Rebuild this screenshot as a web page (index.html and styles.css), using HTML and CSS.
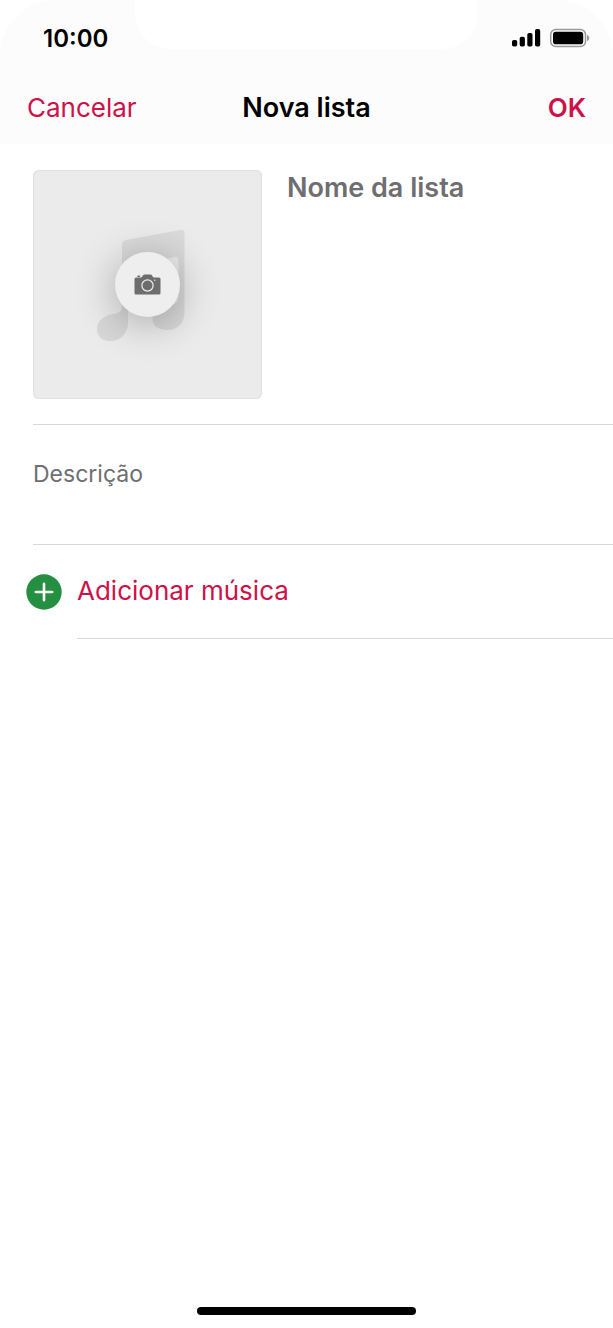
FILE: index.html
```html
<!DOCTYPE html>
<html lang="pt">
<head>
<meta charset="utf-8">
<meta name="viewport" content="width=device-width, initial-scale=1">
<title>Nova lista</title>
<link rel="stylesheet" href="styles.css">
</head>
<body>
<header class="top">
  <div class="notch"></div>
  <div class="status">
    <time class="clock">10:00</time>
    <svg class="status-icons" width="78" height="20" viewBox="0 0 78 20" aria-hidden="true">
      <rect x="0" y="12" width="5.200" height="6.500" rx="1.800"/>
      <rect x="7.700" y="8.800" width="5.200" height="9.700" rx="1.800"/>
      <rect x="15.300" y="5" width="5.200" height="13.500" rx="1.800"/>
      <rect x="23" y="1" width="5.200" height="17.500" rx="1.800"/>
      <rect x="38.700" y="1.500" width="34.800" height="17" rx="5" fill="none" stroke="#999" stroke-width="1.500"/>
      <rect x="41" y="3.800" width="30.200" height="12.400" rx="2.800"/>
      <path d="M75 7c3 1 3 5 0 6z" fill="#999"/>
    </svg>
  </div>
  <nav class="bar">
    <button class="action" type="button">Cancelar</button>
    <h1 class="title">Nova lista</h1>
    <button class="action done" type="button">OK</button>
  </nav>
</header>
<main class="content">
  <section class="intro">
    <button class="cover" type="button" aria-label="Adicionar imagem">
      <svg class="note" viewBox="0 0 229 229" aria-hidden="true">
        <defs>
          <linearGradient id="fade" x1="0" y1="0" x2="0" y2="1">
            <stop offset="0" stop-color="#dadada"/>
            <stop offset="1" stop-color="#d7d7d7"/>
          </linearGradient>
        </defs>
        <path fill="url(#fade)" d="M89 75q0-4 4-5L147 60q4.500-1 4.500 4V142c0 11-7 18-17 18-9 0-15-4-15-11 0-8 7-13 17-14 7-1 9-3 9-9V91q0-5-4-4L99 96q-4 1-4 5v52c0 11-8 18-18 18-8 0-13-5-13-12 0-8 7-14 16-15 7-1 9-3 9-8z"/>
      </svg>
      <span class="camera">
        <svg width="27" height="21" viewBox="0 0 27 21" aria-hidden="true">
          <path fill="#6d6d6d" d="M2 3.500H7c1.800 0 1.300-3 3.500-3h6c2.200 0 1.700 3 3.500 3h5q1.500 0 1.500 1.500v14q0 1.500-1.500 1.500h-23q-1.500 0-1.500-1.500v-14q0-1.500 1.500-1.500z"/>
          <path d="M4 2.300h1.500" stroke="#6d6d6d" stroke-width="1.500" stroke-linecap="round"/>
          <circle cx="13.500" cy="11.500" r="5.600" fill="none" stroke="#eee" stroke-width="1.200"/>
          <circle cx="20.800" cy="6.200" r=".7" fill="#eee"/>
        </svg>
      </span>
    </button>
    <input class="field name" type="text" placeholder="Nome da lista" aria-label="Nome da lista">
  </section>
  <section class="about">
    <input class="field description" type="text" placeholder="Descrição" aria-label="Descrição">
  </section>
  <button class="add" type="button">
    <svg width="36" height="36" viewBox="0 0 36 36" aria-hidden="true">
      <circle cx="18" cy="18" r="17.700" fill="#248f40"/>
      <path d="M18 9.800v16.400M9.800 18h16.400" stroke="#fff" stroke-width="2.600" stroke-linecap="round"/>
    </svg>
    <span class="add-label">Adicionar música</span>
  </button>
</main>
<footer class="home"><div class="home-bar"></div></footer>
</body>
</html>
```
FILE: styles.css
```css
* {
  box-sizing: border-box;
}

body {
  margin: 0;
  min-height: 100vh;
  display: flex;
  flex-direction: column;
  background: #fff;
  color: #000;
  font-family: Inter, "Liberation Sans", sans-serif;
}

button,
input {
  margin: 0;
  padding: 0;
  border: 0;
  background: none;
  font: inherit;
}

.top {
  position: relative;
  padding: 22px 27px 18px;
  background: #fcfcfc;
  border-radius: 56px 56px 0 0;
}

.notch {
  position: absolute;
  top: 0;
  left: 22%;
  right: 22%;
  height: 49px;
  background: #fff;
  border-radius: 0 0 36px 36px;
}

.status {
  position: relative;
  display: flex;
  justify-content: space-between;
  align-items: center;
  height: 32px;
  padding-left: 16px;
}

.clock {
  font-size: 24px;
  font-weight: 600;
}

.status-icons {
  margin-right: -4px;
}

.bar {
  display: grid;
  grid-template-columns: 1fr auto 1fr;
  align-items: center;
  margin-top: 36px;
}

.title,
.action {
  margin: 0;
  font-size: 26px;
  line-height: 36px;
}

.title {
  font-size: 27px;
  font-weight: 600;
}

.action {
  justify-self: start;
  color: #cc1248;
}

.done {
  justify-self: end;
  font-weight: 600;
}

.content {
  flex: 1;
}

.intro {
  display: flex;
  align-items: flex-start;
  gap: 25px;
  margin-left: 33px;
  padding: 26px 0 25px;
  border-bottom: 1px solid #d8d8d8;
}

.cover {
  flex: none;
  display: grid;
  place-items: center;
  width: 229px;
  height: 229px;
  border-radius: 6px;
  background: #ebebeb;
  box-shadow: inset 0 0 0 1px #e0e0e0;
}

.note,
.camera {
  grid-area: 1 / 1;
}

.note {
  width: 100%;
}

.camera {
  display: grid;
  place-items: center;
  width: 65px;
  height: 65px;
  border-radius: 50%;
  background: #eee;
  box-shadow: 0 6px 40px rgba(0, 0, 0, 0.3);
}

.field {
  flex: 1;
  min-width: 0;
  width: 100%;
  height: 34px;
  outline: 0;
}

.field::placeholder {
  color: #6e6e72;
  opacity: 1;
}

.name {
  font-size: 27px;
  font-weight: 600;
}

.description {
  font-size: 23px;
}

.about {
  margin-left: 33px;
  padding: 32px 0 53px;
  border-bottom: 1px solid #d8d8d8;
}

.add {
  display: flex;
  align-items: center;
  gap: 15px;
  width: 100%;
  padding-left: 26px;
  color: #cc1248;
  font-size: 26px;
  text-align: left;
}

.add-label {
  flex: 1;
  padding: 28px 0 29px;
  border-bottom: 1px solid #d8d8d8;
  line-height: 36px;
}

.home {
  display: flex;
  justify-content: center;
  padding-bottom: 13px;
}

.home-bar {
  width: 219px;
  height: 8px;
  border-radius: 4px;
  background: #000;
}
```
